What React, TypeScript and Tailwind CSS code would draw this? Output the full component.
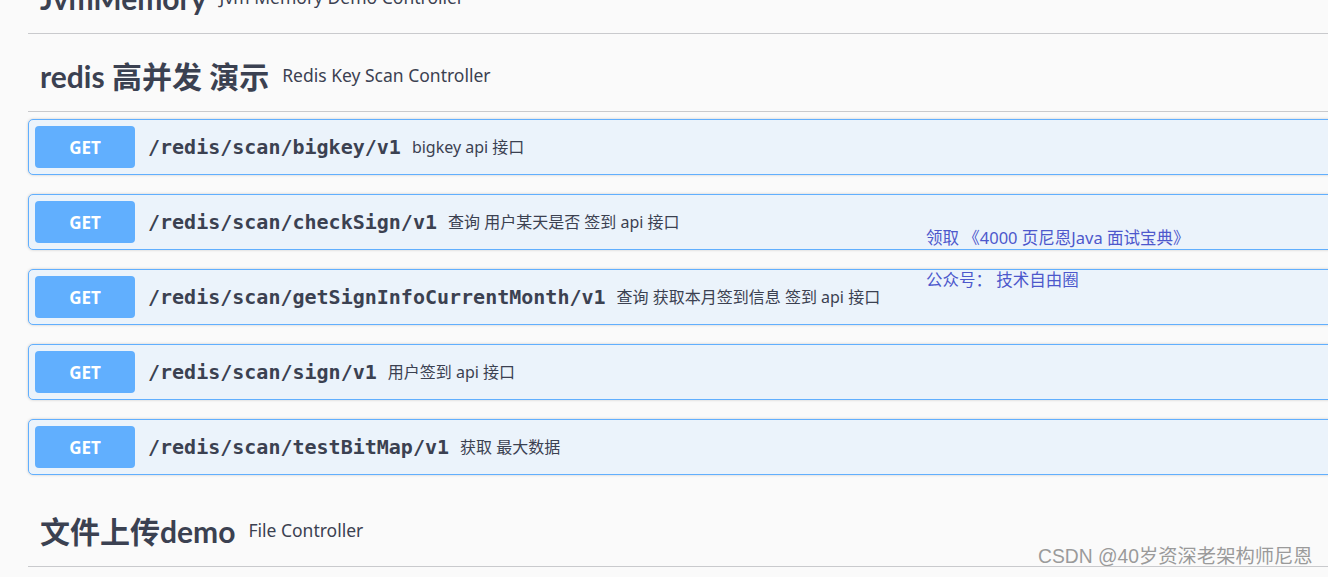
import React from "react";

const sans = "font-['Noto_Sans','Noto_Sans_CJK_SC',sans-serif]";

function Heading({ title, sub, className = "" }: { title: string; sub: string; className?: string }) {
  return (
    <div className={`flex items-center h-[78px] pt-[7px] pl-[12px] border-b border-[#c9cacd] ${className}`}>
      <span className="font-['Lato','Noto_Sans_CJK_SC',sans-serif] text-[30px] font-bold text-[#3b4151] leading-none">{title}</span>
      <span className={`${sans} text-[17.5px] text-[#3b4151] ml-[13px] leading-none`}>{sub}</span>
    </div>
  );
}

function Op({ path, desc }: { path: string; desc: string }) {
  return (
    <div className="h-[56px] border border-[#61affe] rounded-[5px] bg-[#ebf3fb] shadow-[0_0_3px_rgba(0,0,0,0.19)] p-[6px] flex items-center">
      <div className="w-[100px] h-[42px] rounded-[4px] bg-[#61affe] flex items-center justify-center">
        <span className={`${sans} text-white font-bold text-[17px] leading-none`}>GET</span>
      </div>
      <span className="ml-[13px] font-['DejaVu_Sans_Mono',monospace] font-bold text-[20px] text-[#3b4151] leading-none">
        {path}
      </span>
      <span className={`${sans} ml-[11px] text-[16px] text-[#3b4151] leading-none`}>{desc}</span>
    </div>
  );
}

export default function App() {
  return (
    <div className="relative w-[1328px] h-[577px] overflow-hidden bg-[#fafafa]">
      <div className="pl-[28px] w-[1400px]">
        <Heading title="JvmMemory" sub="Jvm Memory Demo Controller" className="mt-[-44px]" />
        <Heading title="redis 高并发 演示" sub="Redis Key Scan Controller" />
        <div className="mt-[7px] flex flex-col gap-[19px]">
          <Op path="/redis/scan/bigkey/v1" desc="bigkey api 接口" />
          <Op path="/redis/scan/checkSign/v1" desc="查询 用户某天是否 签到 api 接口" />
          <Op path="/redis/scan/getSignInfoCurrentMonth/v1" desc="查询 获取本月签到信息 签到 api 接口" />
          <Op path="/redis/scan/sign/v1" desc="用户签到 api 接口" />
          <Op path="/redis/scan/testBitMap/v1" desc="获取 最大数据" />
        </div>
        <Heading title="文件上传demo" sub="File Controller" className="mt-[14px]" />
      </div>

      <div className={`absolute left-[926px] top-[228px] ${sans} text-[16.5px] leading-[20px] text-[#4d58cc]`}>
        领取 《4000 页尼恩Java 面试宝典》
      </div>
      <div className={`absolute left-[926px] top-[270px] ${sans} text-[16.5px] leading-[20px] text-[#4d58cc]`}>
        公众号： 技术自由圈
      </div>

      <div className="absolute left-[1038px] top-[546px] font-['Liberation_Sans','Noto_Sans_CJK_SC',sans-serif] text-[19.3px] leading-[22px] text-[#9a9a9a] [text-shadow:0_0_1px_#ffffff]">
        CSDN @40岁资深老架构师尼恩
      </div>
    </div>
  );
}
